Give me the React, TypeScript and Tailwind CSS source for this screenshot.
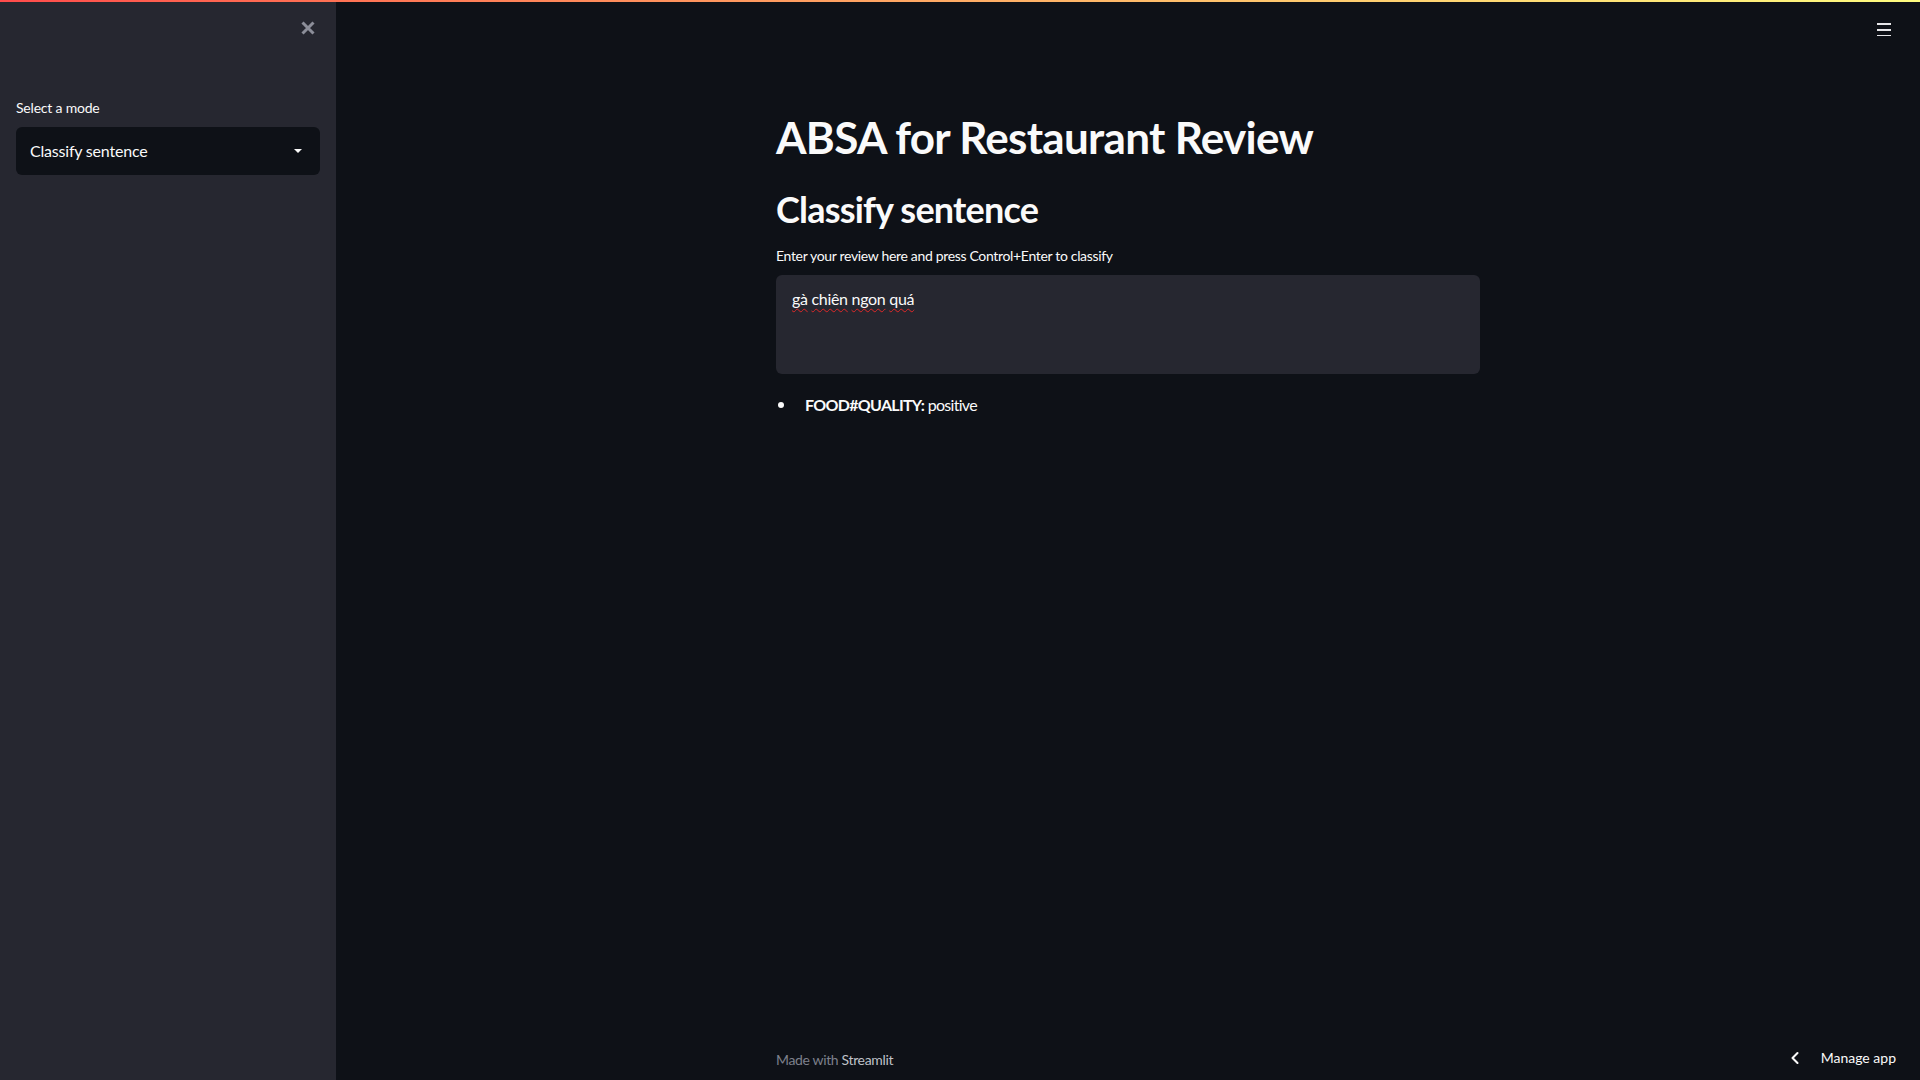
import { ChevronLeft } from "lucide-react";

const font = { fontFamily: "Lato, 'Noto Sans', sans-serif" };

const Sidebar = () => {
  return <aside className="w-[336px] shrink-0 bg-[#262730] flex flex-col px-4">
    <div className="flex justify-end h-[38px] items-start pt-[19px] pr-[5px]">
      <svg width={14} height={14} viewBox="0 0 14 14" className="cursor-pointer">
        <path d="M1.5 1.5 12.5 12.5M12.5 1.5 1.5 12.5" className="stroke-[#8c8e99]" strokeWidth={3} />
      </svg>
    </div>
    <label className="mt-[60px] text-[14px] leading-[1.2] text-[#fafafa] tracking-[-0.2px]">Select a mode</label>
    <div className="mt-[10px] h-[48px] rounded-md bg-[#0e1117] flex items-center justify-between pl-[14px] pr-[18px] cursor-pointer">
      <span className="text-[16px] leading-[1.2] text-[#fafafa] tracking-[-0.2px]">Classify sentence</span>
      <svg width={8} height={4} viewBox="0 0 8 4">
        <path d="M0 0h8L4 4z" className="fill-[#fafafa]" />
      </svg>
    </div>
  </aside>
}

const Spelled = ({ words }: { words: string[] }) => {
  return <>
    {words.map((word, i) => <span key={i}>
      <span className="underline decoration-wavy decoration-[#e02828] decoration-1 underline-offset-[3px]">{word}</span>
      {i < words.length - 1 ? " " : ""}
    </span>)}
  </>
}

const Main = () => {
  return <main className="flex-1 relative flex flex-col min-w-0">
    <div className="flex justify-end h-[56px] pt-[20px] pr-[29px]">
      <svg width={14} height={14} viewBox="0 0 14 14" className="cursor-pointer">
        <rect x={0} y={1} width={14} height={2} className="fill-[#e6e6e9]" />
        <rect x={0} y={7} width={14} height={2} className="fill-[#e6e6e9]" />
        <rect x={0} y={13} width={14} height={2} className="fill-[#e6e6e9]" />
      </svg>
    </div>
    <div className="w-[704px] mx-auto flex flex-col flex-1">
      <h1 className="mt-[53px] text-[44px] font-bold leading-[1.2] text-[#fafafa] tracking-[-0.7px]">
        ABSA for Restaurant Review
      </h1>
      <h2 className="mt-[24px] text-[36px] font-bold leading-[1.2] text-[#fafafa] tracking-[-0.8px]">
        Classify sentence
      </h2>
      <label className="mt-[17px] text-[14px] leading-[1.2] text-[#fafafa] tracking-[-0.33px]">
        Enter your review here and press Control+Enter to classify
      </label>
      <div className="mt-[10px] h-[99px] rounded-md bg-[#262730] px-4 pt-[14px] text-[16px] leading-[1.2] text-[#fafafa] tracking-[-0.3px]">
        <Spelled words={["gà", "chiên", "ngon", "quá"]} />
      </div>
      <ul className="mt-[21px] text-[16px] leading-[1.2] text-[#fafafa]">
        <li className="flex items-center">
          <span className="w-[6px] h-[6px] rounded-full bg-[#fafafa] ml-[2px] mr-[21px] mt-[2px]"></span>
          <span className="tracking-[-0.7px]"><b className="font-bold">FOOD#QUALITY:</b> positive</span>
        </li>
      </ul>
      <div className="mt-auto mb-[11px] text-[14px] leading-[1.2] tracking-[-0.35px]">
        <span className="text-[#7d808c]">Made with </span>
        <span className="text-[#bfc1c8]">Streamlit</span>
      </div>
    </div>
    <div className="absolute right-[24px] bottom-[12px] flex items-center gap-[16px] text-[14px] leading-[1.2] text-[#fafafa] cursor-pointer">
      <ChevronLeft size={20} strokeWidth={2.5} className="text-[#fafafa]" />
      <span>Manage app</span>
    </div>
  </main>
}

const App = () => {
  return <div className="w-full h-screen flex flex-col bg-[#0e1117] overflow-hidden" style={font}>
    <div className="h-[2px] shrink-0 bg-gradient-to-r from-[#ff4b4b] to-[#fffd80]"></div>
    <div className="flex flex-1 min-h-0">
      <Sidebar />
      <Main />
    </div>
  </div>
}

export default App
